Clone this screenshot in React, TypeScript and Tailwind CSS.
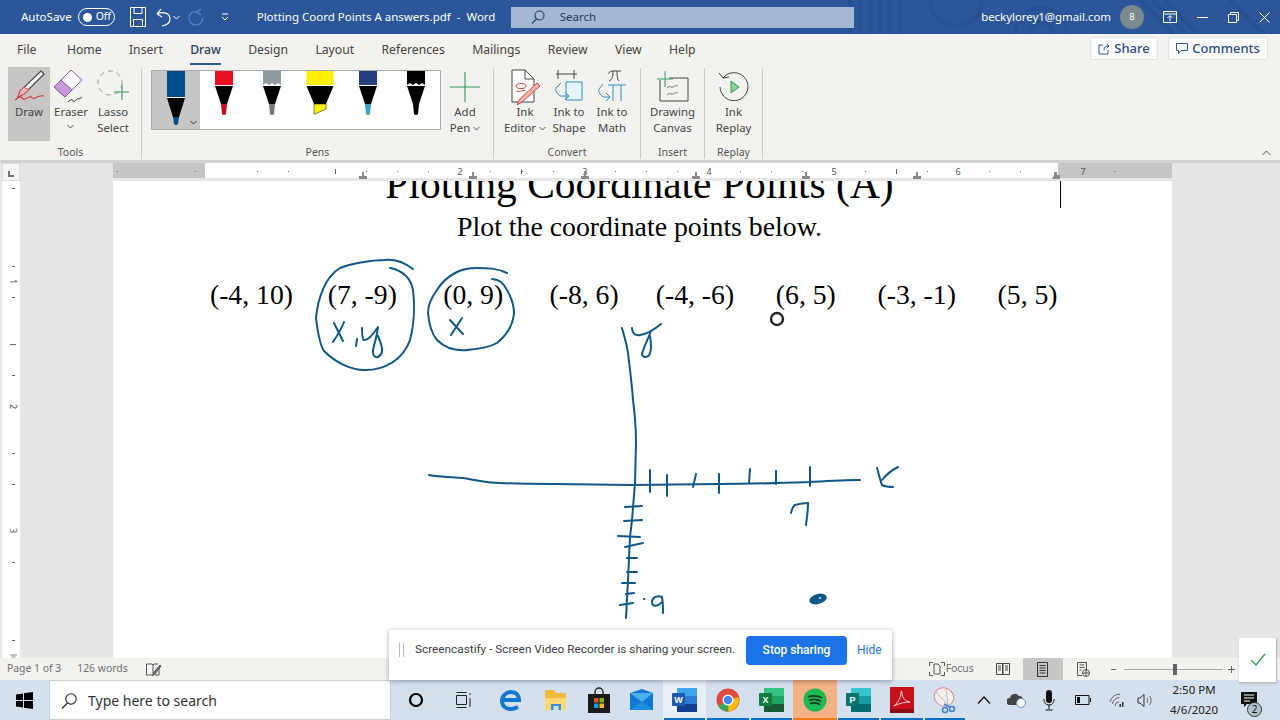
import type { ReactNode } from "react";

const tabs = ["File", "Home", "Insert", "Draw", "Design", "Layout", "References", "Mailings", "Review", "View", "Help"];
const coords = ["(-4, 10)", "(7, -9)", "(0, 9)", "(-8, 6)", "(-4, -6)", "(6, 5)", "(-3, -1)", "(5, 5)"];

function Caret({ className = "" }: { className?: string }) {
  return (
    <svg width="7" height="5" viewBox="0 0 7 5" className={className} fill="none" stroke="currentColor" strokeWidth="1">
      <path d="M0.5 1l3 3 3-3" />
    </svg>
  );
}

function RibbonBtn({ icon, children, className = "" }: { icon: ReactNode; children: ReactNode; className?: string }) {
  return (
    <div className={`flex flex-col items-center h-[74px] pt-[3px] ${className}`}>
      <div className="h-[34px] w-full flex items-center justify-center">{icon}</div>
      <div className="text-center text-[11.4px] leading-[16px] text-[#444] whitespace-nowrap">{children}</div>
    </div>
  );
}

function Group({ label, children, className = "", inner = "" }: { label: string; children: ReactNode; className?: string; inner?: string }) {
  return (
    <div className={`flex flex-col h-[91px] mt-[2px] border-r border-[#c8c8c4] ${className}`}>
      <div className={`flex-1 -mt-[1px] flex items-start ${inner}`}>{children}</div>
      <div className="h-[14px] text-center text-[10.5px] leading-[14px] text-[#555]">{label}</div>
    </div>
  );
}

function Pen({ barrel, tip, w = 18, zig = false, marker = false, h = 14, cone = 18, tipH = 10 }: { barrel: string; tip: string; w?: number; zig?: boolean; marker?: boolean; h?: number; cone?: number; tipH?: number }) {
  const l = 24 - w / 2;
  const r = 24 + w / 2;
  const top = h + 1;
  const end = top + cone;
  return (
    <svg width="48" height="58" viewBox="0 0 48 58">
      <rect x={l} y="0" width={w} height={h} fill={barrel} />
      {zig ? (
        <path d={`M${l} ${h}l3-2 3 2 3-2 3 2 3-2 ${w - 15} 2v2H${l}z`} fill="#fff" />
      ) : (
        <rect x={l} y={h} width={w} height="1" fill="#fff" />
      )}
      <path d={`M${l} ${top}H${r}L${marker ? 30 : 27} ${end}H${marker ? 18 : 21}z`} fill="#000" />
      {marker ? (
        <path d={`M18 ${end}H30V${end + 5}L19 ${end + tipH}H18z`} fill={tip} stroke="#000" strokeWidth=".5" />
      ) : (
        <path d={`M21 ${end}H27L26 ${end + tipH}Q24 ${end + tipH + 2} 22 ${end + tipH}z`} fill={tip} />
      )}
    </svg>
  );
}

function DrawIcon() {
  return (
    <svg width="36" height="36" viewBox="0 0 36 36" fill="none">
      <path d="M30 2l3 3L13 25l-6 3 2-6z" fill="#fff" stroke="#444" strokeWidth="1.2" />
      <path d="M13 18l5 3-5 4-6 3 2-6z" fill="#f4b6b0" stroke="#d24a43" strokeWidth="1" />
      <path d="M4 31l4-3c3-1 3 3 6 2s4-3 6-2 2 2 4 1 6-3 9-2" stroke="#d9302c" strokeWidth="1.1" />
    </svg>
  );
}

function EraserIcon() {
  return (
    <svg width="36" height="36" viewBox="0 0 36 36" fill="none">
      <path d="M1 18L18 1l11 10-17 17z" fill="#fff" stroke="#8a5aa8" strokeWidth="1" />
      <path d="M1 18l7-7 11 10-7 7z" fill="#c59bdc" stroke="#8a5aa8" strokeWidth="1" />
      <path d="M15 33c3-3 5-3 5-1s3-1 4-2 2 1 5-2" stroke="#333" strokeWidth="1" />
    </svg>
  );
}

function LassoIcon() {
  return (
    <svg width="36" height="36" viewBox="0 0 36 36" fill="none">
      <circle cx="15" cy="14" r="12" stroke="#9a9a9a" strokeWidth="1" strokeDasharray="5 4" />
      <path d="M27 16v15M19 23h15" stroke="#3c9a5c" strokeWidth="1.1" />
    </svg>
  );
}

function PlusIcon() {
  return (
    <svg width="32" height="32" viewBox="0 0 32 32" fill="none">
      <path d="M16 1v30M1 16h30" stroke="#2f9a5c" strokeWidth="1.1" />
    </svg>
  );
}

function InkEditorIcon() {
  return (
    <svg width="32" height="36" viewBox="0 0 32 36" fill="none">
      <path d="M3 1h13l9 9v23H3z" fill="#fff" stroke="#444" />
      <path d="M16 1v9h9" stroke="#444" />
      <ellipse cx="12" cy="17" rx="5" ry="2.500" stroke="#d9453d" />
      <path d="M7 22c3 1 6 0 9-1" stroke="#d9453d" />
      <path d="M28 14l3 3-18 16-5 3 2-5z" fill="#f3b5ae" stroke="#d9453d" />
    </svg>
  );
}

function InkShapeIcon() {
  return (
    <svg width="32" height="36" viewBox="0 0 32 36" fill="none">
      <path d="M3 5h21M5 1v9M21 1v9" stroke="#444" />
      <path d="M13 13h16v18H13z" fill="#e8f3fb" stroke="#2f8fc9" />
      <path d="M8 14l-5 5c-1 2 0 3 1 5l3 3h8M12 23l4 4-4 4" stroke="#2f8fc9" />
    </svg>
  );
}

function InkMathIcon() {
  return (
    <svg width="32" height="36" viewBox="0 0 32 36" fill="none">
      <path d="M12 5c1-2 3-3 5-3h8M17 2c0 5-1 9-4 10M21 2c0 4 0 8 2 10" stroke="#444" />
      <path d="M7 15l-4 5c-1 2 0 3 1 5l3 3h6M10 24l4 4-4 4" stroke="#2f8fc9" />
      <path d="M12 16h18M17 16v16M25 16v16" stroke="#2f8fc9" />
    </svg>
  );
}

function CanvasIcon() {
  return (
    <svg width="32" height="34" viewBox="0 0 32 34" fill="none">
      <path d="M3 10v21h28V8H12" stroke="#444" />
      <path d="M8 1v16M0 9h16" stroke="#2f9a5c" />
      <path d="M10 18c3-3 4 0 6-1s3-2 5-1M10 25c3-3 4 0 6-1s3-2 5-1" stroke="#777" />
    </svg>
  );
}

function ReplayIcon() {
  return (
    <svg width="32" height="32" viewBox="0 0 32 32" fill="none">
      <path d="M5 7A14 14 0 1 1 2 16" stroke="#444" />
      <path d="M1 2l4 5 6-1" stroke="#444" />
      <path d="M13 10l8 6-8 6z" fill="#8fd0a0" stroke="#3a9a5a" />
    </svg>
  );
}

function TaskIcon({ w, active, bar, bg, children }: { w: string; active?: boolean; bar?: boolean; bg?: string; children: ReactNode }) {
  return (
    <div className={`relative h-full flex items-center justify-center shrink-0 ${w} ${active ? "bg-[#e9eff7]" : ""} ${bg ?? ""}`}>
      {children}
      {bar && <div className="absolute bottom-0 left-[1px] right-[1px] h-[2px] bg-[#0b6fc4]" />}
    </div>
  );
}

function OfficeTile({ letter, tile, c1, c2, c3 }: { letter: string; tile: string; c1: string; c2: string; c3: string }) {
  return (
    <svg width="25" height="26" viewBox="0 0 25 26">
      <rect x="5" y="1" width="20" height="24" rx="1.5" fill={c2} />
      <rect x="5" y="1" width="20" height="8" fill={c1} />
      <rect x="5" y="17" width="20" height="8" fill={c3} />
      <rect x="0" y="6" width="13" height="13" rx="1" fill={tile} />
      <text x="6.5" y="16" textAnchor="middle" fontSize="9" fontWeight="700" fill="#fff" fontFamily="Liberation Sans">{letter}</text>
    </svg>
  );
}

function Ruler() {
  const dots = [117, 195, 257, 288, 366, 397, 428, 490, 522, 553, 615, 646, 677, 740, 771, 802, 865, 896, 927, 989, 1020, 1114];
  const nums: [number, string][] = [[460, "2"], [585, "3"], [709, "4"], [834, "5"], [958, "6"], [1083, "7"]];
  const stops = [363, 473, 585, 696, 806, 917];
  return (
    <svg className="absolute left-0 top-0" width="1280" height="18" viewBox="0 0 1280 18">
      {dots.map((x) => (
        <rect key={x} x={x} y="8" width="1" height="1" fill="#666" />
      ))}
      <rect x="335" y="6" width="1" height="5" fill="#666" />
      <rect x="521" y="6" width="1" height="5" fill="#666" />
      <rect x="896" y="6" width="1" height="5" fill="#666" />
      {nums.map(([x, n]) => (
        <text key={n} x={x} y="12" textAnchor="middle" fontSize="9" fill="#555" fontFamily="Noto Sans">{n}</text>
      ))}
      {stops.map((x) => (
        <path key={x} d={`M${x - 1} 9h2v4h3v3h-8v-3h3z`} fill="#8a8a8a" />
      ))}
      <path d="M1052 16h8v-4h-3v-3h-3v3z" fill="#8a8a8a" />
      <path d="M205 0h1l6 8-6 7h-1z" fill="#fff" />
    </svg>
  );
}

function SideRuler() {
  const dots = [7, 85, 116, 194, 272, 303, 381, 459];
  const nums: [number, string][] = [[101, "1"], [226, "2"], [350, "3"]];
  return (
    <svg width="18" height="477" viewBox="0 0 18 477">
      {dots.map((y) => (
        <rect key={y} x="10" y={y} width="3" height="1" fill="#666" />
      ))}
      <rect x="8" y="163" width="6" height="1" fill="#666" />
      {nums.map(([y, n]) => (
        <text key={n} x="0" y="0" transform={`translate(8 ${y - 3}) rotate(90)`} fontSize="9" fill="#555" fontFamily="Noto Sans">{n}</text>
      ))}
      <path d="M8 474h7M9.500 476h4" stroke="#888" />
    </svg>
  );
}

function Ink() {
  return (
    <svg className="absolute left-0 top-0 pointer-events-none" width="1280" height="477" viewBox="0 181 1280 477" fill="none" stroke="#0f5788" strokeWidth="2" strokeLinecap="round" strokeLinejoin="round">
      <path d="M413 269C405 263 395 259 385 260C370 260 350 264 340 268C325 277 318 298 316 318C318 335 320 345 324 351C335 362 350 370 365 370C385 370 403 360 410 340C414 325 415 305 413 290C411 278 402 270 390 268" />
      <path d="M507 273C497 268 487 268 477 268C470 268 463 269 457 272C447 277 440 285 437 290C431 298 428 306 428 313C429 325 432 334 437 340C445 348 456 351 467 350C478 349 490 347 497 343C507 335 513 325 514 313C514 305 511 297 507 290C504 284 499 279 492 279" />
      <path d="M334 323L343 341M344 322C341 330 337 336 333 342M357 339L356 346" />
      <path d="M362 328C362 334 362 339 364 340C368 341 374 333 378 327C377 336 374 345 373 350C372 355 375 358 378 357C382 355 383 350 381 344C380 341 379 338 378 336" />
      <path d="M450 320L463 334M462 318L451 335" />
      <path d="M622 328C624 335 627 345 628 353C630 370 632 385 633 400C635 415 636 430 636 443L635 483L632 520L630 537L628 580L626 618" />
      <path d="M429 475C440 477 452 477 463 478C475 480 488 483 500 483C518 484 535 484 553 484L633 485L720 484C750 484 780 483 810 482C827 481 843 480 860 480" />
      <path d="M650 470V492M667 475V496M696 474L693 487M719 474V493M750 469L749 483M776 471V484M810 467V486" />
      <path d="M625 507L642 506M624 521L642 520M618 536L640 537M625 547L643 543M627 558H637M627 572H637M622 583L635 583M626 594L634 593M620 605L633 603" />
      <path d="M632 328C632 333 635 336 640 335C647 334 655 329 661 324M651 331C648 339 643 349 642 354C642 358 649 358 650 353C652 347 651 342 650 336" />
      <path d="M877 468C879 474 880 480 882 485C886 487 890 487 893 487M898 467C892 470 886 475 882 480" />
      <path d="M791 513C792 509 793 506 795 505C799 504 804 503 808 503C808 510 807 518 806 525" />
      <path d="M644 599h.5M662 597C658 595 652 597 652 602C652 607 658 607 662 602M662 597C663 602 663 608 663 613" />
      <ellipse cx="818" cy="599" rx="9" ry="5" transform="rotate(-15 818 599)" fill="#0f5788" stroke="none" />
      <ellipse cx="820" cy="598" rx="1.2" ry=".7" fill="#fff" stroke="none" />
      <circle cx="777" cy="319" r="6" stroke="#222" strokeWidth="2.4" />
    </svg>
  );
}

export default function App() {
  return (
    <div className="relative w-[1280px] h-[720px] overflow-hidden flex flex-col bg-[#f3f2ef] font-['Noto_Sans',sans-serif]">
      {/* title bar */}
      <div className="relative h-[34px] shrink-0 bg-[#2b579a] flex items-center text-white text-[11.5px]">
        <svg className="absolute left-[800px] top-0 opacity-40" width="480" height="34" viewBox="0 0 480 34" fill="none" stroke="#1f4a8c" strokeWidth="4">
          <path d="M50 0v34M60 0v34M70 0v34M80 0v34M90 0v34M100 0v34M130 0a26 26 0 0 0 52 0M215 34a26 26 0 0 1 52 0M229 34a12 12 0 0 1 24 0M340 0l34 34M352 0l34 34M364 0l34 34M430 0l34 34" />
        </svg>
        <span className="relative ml-[21px]">AutoSave</span>
        <div className="relative ml-[6px] w-[37px] h-[18px] rounded-full border border-white flex items-center pl-[4px] gap-[4px] text-[10.5px]">
          <span className="w-[9px] h-[9px] rounded-full bg-white" />
          Off
        </div>
        <svg className="ml-[15px]" width="16" height="20" viewBox="0 0 16 20" fill="none" stroke="#fff">
          <path d="M.5 .5h15v19H.5zM4 .5v6h8v-6M3.500 19.500v-7h9v7" />
        </svg>
        <svg className="ml-[10px]" width="16" height="20" viewBox="0 0 16 20" fill="none" stroke="#fff" strokeWidth="1.2">
          <path d="M1 7l5 3M1 7l4-5M1 7c6-3 13-1 13 5 0 4-3 6-8 7" />
        </svg>
        <Caret className="ml-[1px] text-white" />
        <svg className="ml-[8px]" width="16" height="18" viewBox="0 0 16 18" fill="none" stroke="#5f85bd" strokeWidth="1.2">
          <path d="M9 4l4-3M9 4l4 3M9 4C3 3 1 7 1 10c0 4 3 7 7 7s7-4 7-7" />
        </svg>
        <svg className="ml-[17px]" width="8" height="8" viewBox="0 0 8 8" fill="none" stroke="#fff">
          <path d="M1 1h6M1 4l3 3 3-3" />
        </svg>
        <span className="ml-[28px] w-[254px] whitespace-nowrap">Plotting Coord Points A answers.pdf&nbsp; -&nbsp; Word</span>
        <div className="relative h-[21px] w-[343px] bg-[#a4b7d3] flex items-center text-[#2a3c58] pl-[20px]">
          <svg width="14" height="14" viewBox="0 0 14 14" fill="none" stroke="#243c5e" strokeWidth="1.1">
            <circle cx="8.500" cy="5.500" r="4.500" />
            <path d="M5.500 9L1 13.500" />
          </svg>
          <span className="ml-[15px] text-[11.5px]">Search</span>
        </div>
        <span className="relative ml-auto text-[11.4px]">beckylorey1@gmail.com</span>
        <div className="relative ml-[9px] w-[24px] h-[24px] rounded-full bg-[#7a8a8e] flex items-center justify-center text-[8px]">B</div>
        <svg className="relative ml-[19px]" width="14" height="12" viewBox="0 0 14 12" fill="none" stroke="#fff">
          <path d="M.5 .5h13v11H.5zM.5 3h13M7 10V5M4.500 7L7 4.500 9.500 7" />
        </svg>
        <div className="relative ml-[20px] w-[11px] h-[1px] bg-white" />
        <svg className="relative ml-[20px]" width="11" height="11" viewBox="0 0 11 11" fill="none" stroke="#fff">
          <path d="M.5 2.500h8v8h-8zM2.500 2.500v-2h8v8h-2" />
        </svg>
        <svg className="relative ml-[20px] mr-[10px]" width="11" height="11" viewBox="0 0 11 11" fill="none" stroke="#fff">
          <path d="M.5 .5l10 10M10.500 .5l-10 10" />
        </svg>
      </div>

      {/* tabs */}
      <div className="h-[32px] shrink-0 flex items-center pl-[17px] pr-[12px] text-[12.2px] text-[#444] relative">
        <div className="flex items-center gap-[27.4px]">
          {tabs.map((t) => (
            <span key={t} className={t === "Draw" ? "relative font-medium text-[#2b3f5f]" : t === "File" ? "mr-[3px]" : ""}>
              {t}
              {t === "Draw" && <span className="absolute left-0 right-0 -bottom-[6px] h-[2px] bg-[#2b579a]" />}
            </span>
          ))}
        </div>
        <div className="ml-auto -mt-[3px] flex items-center gap-[10px] font-medium text-[#2b4d7e] text-[13px]">
          <div className="h-[23px] w-[68px] bg-white/80 border border-[#e2e2e0] rounded-[2px] flex items-center justify-center gap-[4px]">
            <svg width="12" height="12" viewBox="0 0 12 12" fill="none" stroke="#2b579a">
              <path d="M5 2H1v9h9V7M6 7c0-3 2-4 5-4M8.500 1L11 3 8.500 5.500" />
            </svg>
            Share
          </div>
          <div className="h-[23px] w-[100px] bg-white/80 border border-[#e2e2e0] rounded-[2px] flex items-center justify-center gap-[4px]">
            <svg width="12" height="12" viewBox="0 0 12 12" fill="none" stroke="#2b579a">
              <path d="M.5 .5h11v7H5L2.500 10.500V7.500h-2z" />
            </svg>
            Comments
          </div>
        </div>
      </div>

      {/* ribbon */}
      <div className="relative h-[94px] shrink-0 flex items-start">
        <Group label="Tools" className="w-[142px]" inner="pl-[8px]">
          <div className="bg-[#c8c6c4] w-[42px] h-[74px]">
            <RibbonBtn icon={<DrawIcon />}>Draw</RibbonBtn>
          </div>
          <RibbonBtn icon={<EraserIcon />} className="w-[42px]">
            Eraser
            <Caret className="mx-auto mt-[4px] text-[#555]" />
          </RibbonBtn>
          <RibbonBtn icon={<LassoIcon />} className="w-[42px]">
            Lasso
            <br />
            Select
          </RibbonBtn>
        </Group>
        <Group label="Pens" className="w-[352px]" inner="pl-[9px]">
          <div className="mt-[3px] w-[290px] h-[60px] bg-white border border-[#aaa] flex">
            <div className="relative w-[48px] h-full bg-[#c8c6c4]">
              <Pen barrel="#004e8c" tip="#004e8c" h={26} cone={19} tipH={7} />
              <Caret className="absolute right-[3px] bottom-[4px] text-[#333]" />
            </div>
            <Pen barrel="#e81123" tip="#c50f1f" />
            <Pen barrel="#8e9a9e" tip="#777" zig />
            <Pen barrel="#fff100" tip="#fff100" w={27} marker />
            <Pen barrel="#23407c" tip="#3fa0c0" />
            <Pen barrel="#000" tip="#000" zig />
          </div>
          <RibbonBtn icon={<PlusIcon />} className="ml-[1px] w-[46px]">
            Add
            <br />
            <span className="inline-flex items-center gap-[3px]">Pen <Caret className="text-[#555]" /></span>
          </RibbonBtn>
        </Group>
        <Group label="Convert" className="w-[147px]" inner="pl-[9px]">
          <RibbonBtn icon={<InkEditorIcon />} className="w-[44px]">
            Ink
            <br />
            <span className="inline-flex items-center gap-[3px]">Editor <Caret className="text-[#555]" /></span>
          </RibbonBtn>
          <RibbonBtn icon={<InkShapeIcon />} className="w-[44px]">
            Ink to
            <br />
            Shape
          </RibbonBtn>
          <RibbonBtn icon={<InkMathIcon />} className="w-[42px]">
            Ink to
            <br />
            Math
          </RibbonBtn>
        </Group>
        <Group label="Insert" className="w-[64px]">
          <RibbonBtn icon={<CanvasIcon />} className="w-full">
            Drawing
            <br />
            Canvas
          </RibbonBtn>
        </Group>
        <Group label="Replay" className="w-[58px]">
          <RibbonBtn icon={<ReplayIcon />} className="w-full">
            Ink
            <br />
            Replay
          </RibbonBtn>
        </Group>
        <svg className="absolute right-[9px] bottom-[4px]" width="9" height="6" viewBox="0 0 9 6" fill="none" stroke="#555">
          <path d="M.5 5L4.500 1l4 4" />
        </svg>
      </div>

      <div className="h-[3px] shrink-0 bg-[#d2d2ce]" />

      {/* ruler */}
      <div className="relative h-[18px] shrink-0 flex bg-[#e6e6e6]">
        <div className="ml-[2px] w-[18px] h-[18px] bg-[#f6f6f6] border border-[#dcdcdc] flex items-end justify-center pb-[3px]">
          <div className="w-[6px] h-[6px] border-l-2 border-b-2 border-[#777]" />
        </div>
        <div className="ml-[93px] w-[92px] bg-[#c6c6c6] h-[15px]" />
        <div className="w-[853px] bg-white h-[15px]" />
        <div className="w-[114px] bg-[#c6c6c6] h-[15px]" />
        <Ruler />
      </div>

      {/* document */}
      <div className="relative flex-1 min-h-0 flex bg-[#e6e6e6] overflow-hidden">
        <div className="ml-[2px] w-[18px] bg-white">
          <SideRuler />
        </div>
        <div className="ml-[93px] w-[1059px] bg-white font-['Liberation_Serif',serif] text-black overflow-hidden">
          <div className="-mt-[20px] h-[52px] text-center pr-[6px] text-[41.5px] leading-[46px] whitespace-nowrap">Plotting Coordinate Points (A)</div>
          <div className="mt-[-1px] text-center pr-[6px] text-[27.8px] leading-[30px]">Plot the coordinate points below.</div>
          <div className="mt-[38px] pl-[83px] pr-[89px] grid grid-cols-8 text-center text-[27.7px] leading-[30px] whitespace-nowrap">
            {coords.map((c) => (
              <div key={c}>{c}</div>
            ))}
          </div>
        </div>
        <div className="absolute left-[1060px] top-0 w-[1px] h-[27px] bg-black" />
        <Ink />
      </div>

      {/* status bar */}
      <div className="relative h-[22px] shrink-0 flex items-center pl-[7px] text-[10.4px] text-[#707070]">
        <span>Page 1 of 3</span>
        <span className="ml-[16px]">126 words</span>
        <svg className="ml-[18px]" width="16" height="15" viewBox="0 0 16 15" fill="none" stroke="#555">
          <path d="M6 2H.5v11H6l1 1V3zM7 3l1-1h4M13 6v7H9" />
          <path d="M14 3l1 1-6 8-2 1 1-3z" fill="#777" />
        </svg>
        <svg className="ml-[767px]" width="16" height="16" viewBox="0 0 16 16" fill="none" stroke="#555">
          <path d="M.5 5V1.500H4M15.500 5V1.500H12M.5 11v3.500H4M15.500 11v3.500H12" />
          <path d="M5 3h4l2 2v8H5z" />
        </svg>
        <span className="ml-[1px] w-[44px]">Focus</span>
        <svg className="ml-[6px]" width="14" height="14" viewBox="0 0 14 14" fill="none" stroke="#444">
          <path d="M.5 1.500h6v11h-6zM7 1.500h6.500v11H7zM2 4h3M2 6h3M2 8h3M9 4h3M9 6h3M9 8h3" />
        </svg>
        <div className="ml-[13px] w-[40px] h-full bg-[#c8c6c4] flex items-center justify-center">
          <svg width="11" height="15" viewBox="0 0 11 15" fill="none" stroke="#333">
            <path d="M.5 .5h10v14H.5zM2.500 3.500h6M2.500 6h6M2.500 8.500h6M2.500 11h6" />
          </svg>
        </div>
        <svg className="ml-[13px]" width="14" height="15" viewBox="0 0 14 15" fill="none" stroke="#555">
          <path d="M1.500 .5h9v8M1.500 .5v13H6M3.500 3h5M3.500 5.500h5M3.500 8h2" />
          <circle cx="10" cy="11" r="3.500" />
          <path d="M6.500 11h7M10 7.500v7" />
        </svg>
        <div className="ml-[21px] w-[5px] h-[1px] bg-[#666]" />
        <div className="relative ml-[8px] w-[99px] h-[1px] bg-[#aaa]">
          <div className="absolute left-[49px] -top-[5px] w-[4px] h-[11px] bg-[#666]" />
        </div>
        <div className="relative ml-[5px] w-[7px] h-[1px] bg-[#666]">
          <div className="absolute left-[3px] -top-[3px] w-[1px] h-[7px] bg-[#666]" />
        </div>
      </div>

      {/* taskbar */}
      <div className="h-[40px] shrink-0 flex items-center bg-[#d5e0ee]">
        <div className="w-[49px] h-full flex items-center justify-center">
          <svg width="17" height="17" viewBox="0 0 17 17" fill="#000">
            <path d="M0 2.500l7-1v6.500H0zM8 1.300L17 0v8H8zM0 9h7v6.500l-7-1zM8 9h9v8l-9-1.300z" />
          </svg>
        </div>
        <div className="w-[342px] h-[40px] bg-white border border-[#c8d0da] flex items-center pl-[11px] pt-[1px] text-[#333]">
          <svg width="16" height="16" viewBox="0 0 16 16" fill="none" stroke="#222" strokeWidth="1.1">
            <circle cx="10" cy="6" r="5.200" />
            <path d="M6.500 10L1 15.500" />
          </svg>
          <span className="ml-[11px] text-[14px]">Type here to search</span>
        </div>
        <TaskIcon w="w-[49px]">
          <svg width="16" height="16" viewBox="0 0 16 16" fill="none" stroke="#000" strokeWidth="2.2"><circle cx="8" cy="8" r="6" /></svg>
        </TaskIcon>
        <TaskIcon w="w-[47px]">
          <svg width="16" height="18" viewBox="0 0 16 18" fill="none" stroke="#222">
            <path d="M.5 4.500h10v9H.5zM.5 1.500h10M.5 16.500h10M14 2v2M14 7v9" />
          </svg>
        </TaskIcon>
        <TaskIcon w="w-[47px]">
          <svg width="22" height="22" viewBox="0 0 22 22" fill="none" stroke="#0f78d4" strokeWidth="4">
            <path d="M3 11h16c0-5-3-8-8-8s-9 4-9 9c0 5 4 8 9 8 3 0 5-1 7-2" />
          </svg>
        </TaskIcon>
        <TaskIcon w="w-[43px]">
          <svg width="23" height="22" viewBox="0 0 23 22">
            <path d="M1 1h9l2 3h10v5H1z" fill="#f2b93b" />
            <path d="M1 9h21v12H1z" fill="#fcd877" />
            <path d="M7 15h10v6H7z" fill="#3d8fd0" />
            <path d="M9.500 17h5v4h-5z" fill="#d5e0ee" />
          </svg>
        </TaskIcon>
        <TaskIcon w="w-[43px]">
          <svg width="24" height="26" viewBox="0 0 24 26">
            <path d="M8 8V5a4 4 0 0 1 8 0v3" fill="none" stroke="#222" strokeWidth="1.4" />
            <rect x="1" y="7" width="22" height="19" fill="#1a1a1a" />
            <rect x="7" y="11" width="4.500" height="4.500" fill="#f25022" />
            <rect x="12.500" y="11" width="4.500" height="4.500" fill="#7fba00" />
            <rect x="7" y="16.500" width="4.500" height="4.500" fill="#00a4ef" />
            <rect x="12.500" y="16.500" width="4.500" height="4.500" fill="#ffb900" />
          </svg>
        </TaskIcon>
        <TaskIcon w="w-[43px]">
          <svg width="25" height="22" viewBox="0 0 25 22">
            <path d="M1 4L13 0l11 4v17H1z" fill="#0f78d4" />
            <path d="M1 4l12 9 11-9z" fill="#50b0ee" />
            <path d="M1 21l12-9 11 9z" fill="#1c8ee0" />
          </svg>
        </TaskIcon>
        <TaskIcon w="w-[43px]" active bar>
          <OfficeTile letter="W" tile="#1a5cb0" c1="#41a5ee" c2="#2b7cd3" c3="#103f91" />
        </TaskIcon>
        <TaskIcon w="w-[44px]" bar>
          <svg width="24" height="24" viewBox="0 0 24 24">
            <circle cx="12" cy="12" r="11.500" fill="#e04a3c" />
            <path d="M12 12L2.500 18a11.500 11.500 0 0 0 10 5.500z" fill="#34a853" />
            <path d="M12 12l10.500-3a11.500 11.500 0 0 1-10 14.500z" fill="#fbbc05" />
            <circle cx="12" cy="12" r="5.500" fill="#fff" />
            <circle cx="12" cy="12" r="4.200" fill="#4285f4" />
          </svg>
        </TaskIcon>
        <TaskIcon w="w-[43px]" bar>
          <OfficeTile letter="X" tile="#107c41" c1="#33c481" c2="#21a366" c3="#185c37" />
        </TaskIcon>
        <TaskIcon w="w-[44px]" bg="bg-[#f4b183]">
          <svg width="24" height="24" viewBox="0 0 24 24" fill="none">
            <circle cx="12" cy="12" r="11.500" fill="#1db954" />
            <path d="M5.500 8.500c4-1 9-1 13 1M6.500 12c3.500-1 8-.7 11 1M7.500 15.300c3-.7 6.500-.4 9 .9" stroke="#173a22" strokeWidth="1.800" strokeLinecap="round" />
          </svg>
          <div className="absolute bottom-0 left-0 right-0 h-[2px] bg-[#f07a1a]" />
        </TaskIcon>
        <TaskIcon w="w-[43px]" bar>
          <OfficeTile letter="P" tile="#077568" c1="#37c6d0" c2="#1a9ba1" c3="#036c70" />
        </TaskIcon>
        <TaskIcon w="w-[44px]" bar>
          <svg width="24" height="26" viewBox="0 0 24 26" fill="none">
            <rect width="24" height="26" fill="#c8101a" />
            <rect y="22" width="24" height="4" fill="#8d0b12" />
            <path d="M4 19c4-3 7-9 7-14 0-2 1-1 1 1 0 5 4 9 8 9-5 0-10 1-16 4z" stroke="#fff" strokeWidth=".8" />
          </svg>
        </TaskIcon>
        <TaskIcon w="w-[42px]" bar>
          <svg width="26" height="28" viewBox="0 0 26 28" fill="none">
            <ellipse cx="12" cy="11" rx="10" ry="9" transform="rotate(25 12 11)" fill="#f5eeee" stroke="#d88" />
            <path d="M4 6l13 14M14 3l2 15" stroke="#bbb" />
            <path d="M12 18l6 3" stroke="#3a7ed0" strokeWidth="1.500" />
            <circle cx="13" cy="24" r="2.500" stroke="#3a7ed0" strokeWidth="1.500" />
            <circle cx="20" cy="23" r="2.500" stroke="#3a7ed0" strokeWidth="1.500" />
          </svg>
        </TaskIcon>
        <TaskIcon w="w-[36px]">
          <svg width="14" height="8" viewBox="0 0 14 8" fill="none" stroke="#111" strokeWidth="1.300"><path d="M1 7.500L7 1l6 6.500" /></svg>
        </TaskIcon>
        <TaskIcon w="w-[30px]">
          <svg width="20" height="16" viewBox="0 0 20 16">
            <path d="M3 13a3.500 3.500 0 0 1 0-7 5 5 0 0 1 9-2 4 4 0 0 1 4 4v5z" fill="#444" />
            <circle cx="14" cy="11" r="4.500" fill="#fff" stroke="#6a8fc0" />
          </svg>
        </TaskIcon>
        <TaskIcon w="w-[34px]">
          <svg width="12" height="21" viewBox="0 0 12 21" fill="none">
            <rect x="3" y="0" width="6" height="13" rx="3" fill="#111" />
            <path d="M1 9c0 4 2 6 5 6s5-2 5-6M6 15v4M2.500 20h7" stroke="#111" />
          </svg>
        </TaskIcon>
        <TaskIcon w="w-[33px]">
          <svg width="16" height="10" viewBox="0 0 16 10" fill="none" stroke="#111">
            <path d="M.5 .5h13.500v9H.5z" />
            <rect x="2" y="2" width="3" height="6" fill="#111" stroke="none" />
            <path d="M15.500 3v4" />
          </svg>
        </TaskIcon>
        <TaskIcon w="w-[34px]">
          <svg width="15" height="15" viewBox="0 0 15 15" fill="none" stroke="#666">
            <path d="M1 9a11 11 0 0 1 10-8M3.500 11a7.500 7.500 0 0 1 7-6.500M6 13a4 4 0 0 1 4-4" />
            <rect x="10.500" y="11" width="1.500" height="3" fill="#333" stroke="none" />
            <rect x="13" y="9" width="1.500" height="5" fill="#333" stroke="none" />
          </svg>
        </TaskIcon>
        <TaskIcon w="w-[24px]">
          <svg width="16" height="15" viewBox="0 0 16 15" fill="none" stroke="#333">
            <path d="M1 5v5h2l4 3.500v-12L3 5z" />
            <path d="M10 5a4 4 0 0 1 0 5M12.500 3a7 7 0 0 1 0 9" stroke="#666" />
          </svg>
        </TaskIcon>
        <div className="w-[76px] pr-[2px] text-center text-[11.5px] leading-[20px] text-[#222]">
          2:50 PM
          <br />
          4/6/2020
        </div>
        <div className="relative w-[32px] h-full flex items-center justify-center">
          <svg width="16" height="16" viewBox="0 0 16 16">
            <path d="M0 0h16v12H6l-3 3v-3H0z" fill="#111" />
            <path d="M3 3h10M3 6h10M3 9h6" stroke="#fff" />
          </svg>
          <div className="absolute right-[3px] bottom-[3px] w-[15px] h-[15px] rounded-full bg-[#b8c2cc] border border-[#333] text-[10px] leading-[13px] text-center text-[#111]">2</div>
        </div>
      </div>

      {/* sharing notice */}
      <div className="absolute left-[389px] top-[630px] w-[503px] h-[50px] pb-[10px] bg-white shadow-[0_1px_5px_rgba(0,0,0,0.35)] flex items-center font-['Roboto',sans-serif] text-[11.8px] text-[#3c4043]">
        <div className="ml-[10px] w-[5px] h-[14px] border-x border-[#bbb]" />
        <span className="ml-[11px] w-[320px] whitespace-nowrap">Screencastify - Screen Video Recorder is sharing your screen.</span>
        <div className="ml-[11px] w-[101px] h-[29px] rounded-[4px] bg-[#1a73e8] text-white text-[12px] font-medium flex items-center justify-center">Stop sharing</div>
        <span className="ml-[10px] text-[#1a73e8] text-[12px]">Hide</span>
      </div>

      {/* ink check button */}
      <div className="absolute left-[1239px] top-[638px] w-[38px] h-[45px] bg-white border-b border-r border-[#bbb] shadow-sm flex items-center justify-center">
        <svg width="16" height="14" viewBox="0 0 16 14" fill="none" stroke="#2f9a5c" strokeWidth="1.300">
          <path d="M1 7l5 5 9-11" />
        </svg>
      </div>
    </div>
  );
}
